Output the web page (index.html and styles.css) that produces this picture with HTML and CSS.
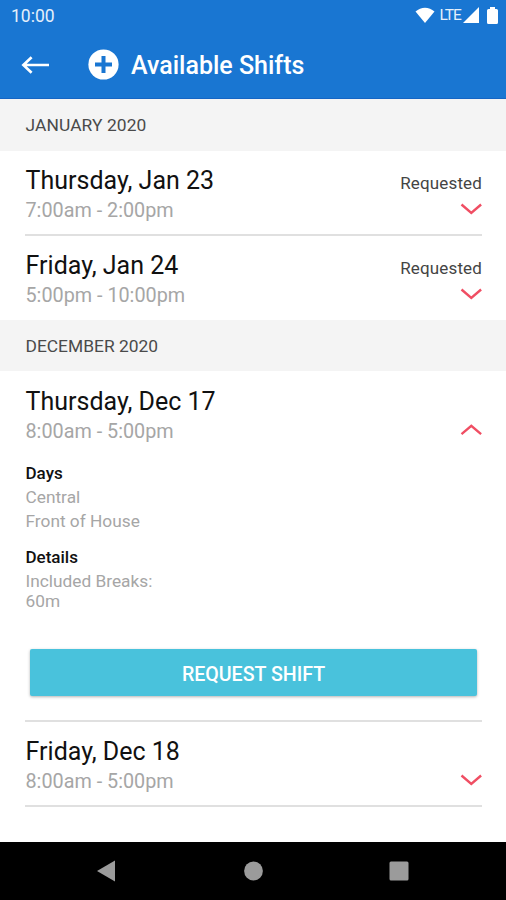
FILE: index.html
```html
<!DOCTYPE html>
<html lang="en">
<head>
    <meta charset="UTF-8">
    <meta name="viewport" content="width=device-width, initial-scale=1.0">
    <title>Available Shifts</title>
    <link rel="stylesheet" href="styles.css">
</head>
<body>
    <div class="screen">
        <header class="header">
            <div class="status-bar">
                <span class="clock">10:00</span>
                <div class="status-icons">
                    <svg class="wifi" width="20" height="17" viewBox="0 0 20 17">
                        <path d="M0.5 4.6C6 -0.6 14 -0.6 19.5 4.6L10 16Z" fill="#fff"/>
                    </svg>
                    <span class="network">LTE</span>
                    <svg class="signal" width="16" height="16" viewBox="0 0 16 16">
                        <path d="M16 0V16H0Z" fill="#fff"/>
                    </svg>
                    <svg class="battery" width="11" height="17" viewBox="0 0 11 17">
                        <path d="M3 0H8V2H9.5Q11 2 11 3.5V15.5Q11 17 9.5 17H1.5Q0 17 0 15.5V3.5Q0 2 1.5 2H3Z" fill="#fff"/>
                    </svg>
                </div>
            </div>
            <div class="app-bar">
                <svg class="back" width="28" height="18" viewBox="0 0 28 18">
                    <path d="M28 9H2.4M10.6 1.2L2.4 9L10.6 16.8" fill="none" stroke="#fff" stroke-width="2.7"/>
                </svg>
                <svg class="plus" width="31" height="31" viewBox="0 0 31 31">
                    <circle cx="15.5" cy="15.5" r="15.1" fill="#fff"/>
                    <path d="M15.5 7V24M7 15.5H24" stroke="#1976d2" stroke-width="4"/>
                </svg>
                <h1 class="page-title">Available Shifts</h1>
            </div>
        </header>

        <main class="shifts">
            <h2 class="month january">JANUARY 2020</h2>
            <div class="shift">
                <div class="shift-info">
                    <div class="shift-date">Thursday, Jan 23</div>
                    <div class="shift-time">7:00am - 2:00pm</div>
                </div>
                <div class="shift-side">
                    <span class="shift-status">Requested</span>
                    <svg class="chevron" width="22" height="12" viewBox="0 0 22 12">
                        <path d="M1.5 1.5L11.3 9.9L21.1 1.5"/>
                    </svg>
                </div>
            </div>
            <div class="shift last">
                <div class="shift-info">
                    <div class="shift-date">Friday, Jan 24</div>
                    <div class="shift-time">5:00pm - 10:00pm</div>
                </div>
                <div class="shift-side">
                    <span class="shift-status">Requested</span>
                    <svg class="chevron" width="22" height="12" viewBox="0 0 22 12">
                        <path d="M1.5 1.5L11.3 9.9L21.1 1.5"/>
                    </svg>
                </div>
            </div>

            <h2 class="month december">DECEMBER 2020</h2>
            <div class="shift open">
                <div class="shift-info">
                    <div class="shift-date">Thursday, Dec 17</div>
                    <div class="shift-time">8:00am - 5:00pm</div>
                </div>
                <div class="shift-side">
                    <svg class="chevron" width="22" height="12" viewBox="0 0 22 12">
                        <path d="M1.5 10.2L11.3 1.8L21.1 10.2"/>
                    </svg>
                </div>
            </div>
            <div class="shift-details">
                <h3 class="detail-title">Days</h3>
                <p class="detail">Central</p>
                <p class="detail">Front of House</p>
                <h3 class="detail-title details">Details</h3>
                <p class="detail">Included Breaks:<br>60m</p>
                <button class="request-button">REQUEST SHIFT</button>
            </div>
            <div class="shift">
                <div class="shift-info">
                    <div class="shift-date">Friday, Dec 18</div>
                    <div class="shift-time">8:00am - 5:00pm</div>
                </div>
                <div class="shift-side">
                    <svg class="chevron" width="22" height="12" viewBox="0 0 22 12">
                        <path d="M1.5 1.5L11.3 9.9L21.1 1.5"/>
                    </svg>
                </div>
            </div>
        </main>

        <nav class="nav-bar">
            <svg width="20" height="22" viewBox="0 0 20 22">
                <path d="M19 0.5V21.5L1 11Z" fill="#9b9b9b"/>
            </svg>
            <svg width="20" height="20" viewBox="0 0 20 20">
                <circle cx="10.5" cy="10" r="9.4" fill="#9b9b9b"/>
            </svg>
            <svg width="20" height="20" viewBox="0 0 20 20">
                <rect x="0.5" y="0.5" width="19" height="19" rx="1.5" fill="#9b9b9b"/>
            </svg>
        </nav>
    </div>
</body>
</html>
```
FILE: styles.css
```css
* {
    box-sizing: border-box;
}

body {
    margin: 0;
    font-family: Roboto, sans-serif;
    background-color: #fff;
    color: #111;
}

h1, h2, h3, p {
    margin: 0;
    font-weight: normal;
}

svg {
    display: block;
    flex: none;
}

.screen {
    width: 506px;
    height: 900px;
    display: flex;
    flex-direction: column;
}

.header {
    height: 99px;
    background-color: #1976d2;
    border-bottom: 1px solid #1565c4;
    color: #fff;
}

.status-bar {
    height: 32px;
    padding: 0 8px 0 11px;
    display: flex;
    justify-content: space-between;
    align-items: center;
}

.clock {
    margin-top: -1px;
    font-size: 17.5px;
    color: #e4effb;
}

.status-icons {
    display: flex;
    align-items: center;
    margin-top: -2px;
}

.network {
    margin: 0 2px 0 4px;
    font-size: 15.5px;
    line-height: 18px;
    letter-spacing: -0.9px;
    color: #e4effb;
}

.battery {
    margin-left: 8px;
}

.app-bar {
    height: 66px;
    padding-left: 21px;
    display: flex;
    align-items: center;
}

.plus {
    margin: -1px 0 0 39px;
}

.page-title {
    margin-left: 12px;
    padding-top: 2px;
    font-size: 25px;
    font-weight: 500;
    line-height: 30px;
}

.shifts {
    flex: 1;
}

.month {
    height: 51px;
    padding-left: 25.5px;
    background-color: #f4f4f4;
    color: #4a4a4a;
    font-size: 17.4px;
    line-height: 51px;
}

.january {
    height: 52px;
    line-height: 53px;
    letter-spacing: 0.1px;
}

.december {
    line-height: 53px;
}

.shift {
    height: 85px;
    margin: 0 24px 0 25px;
    padding-top: 15px;
    border-bottom: 2px solid #e0e0e0;
    display: flex;
    justify-content: space-between;
}

.shift.last {
    height: 84px;
    border-bottom: none;
}

.shift.open {
    height: 86px;
    border-bottom: none;
    padding-top: 16px;
}

.shift-date {
    padding-left: 0.6px;
    font-size: 25px;
    line-height: 30px;
}

.shift-time {
    padding-left: 0.5px;
    font-size: 19.8px;
    line-height: 29px;
    color: #a6a6a6;
}

.shift-side {
    display: flex;
    flex-direction: column;
    justify-content: flex-end;
    align-items: flex-end;
    height: 49px;
}

.shift-status {
    font-size: 17px;
    line-height: 20px;
    letter-spacing: 0.15px;
    margin-bottom: 10px;
    color: #444;
}

.chevron {
    fill: none;
    stroke: #f04e63;
    stroke-width: 2.4;
}

.shift-details {
    height: 265px;
    margin: 0 24px 0 25px;
    padding: 6px 5px 0 0.5px;
    border-bottom: 2px solid #e0e0e0;
}

.detail-title {
    font-size: 17px;
    line-height: 20px;
    font-weight: 500;
}

.detail {
    margin-top: 4px;
    font-size: 17.3px;
    line-height: 20px;
    color: #a6a6a6;
}

.detail-title.details {
    margin-top: 16px;
}

.request-button {
    display: block;
    width: 447px;
    height: 47px;
    margin: 38px 0 0 4.5px;
    padding: 3px 0 0;
    border: none;
    border-radius: 2px;
    background-color: #49c2dc;
    box-shadow: 0 1px 3px rgba(0, 0, 0, 0.3);
    color: #fff;
    font-family: inherit;
    font-size: 19.6px;
    font-weight: 500;
}

.nav-bar {
    height: 58px;
    padding: 0 97px 0 96px;
    background-color: #000;
    display: flex;
    justify-content: space-between;
    align-items: center;
}
```
